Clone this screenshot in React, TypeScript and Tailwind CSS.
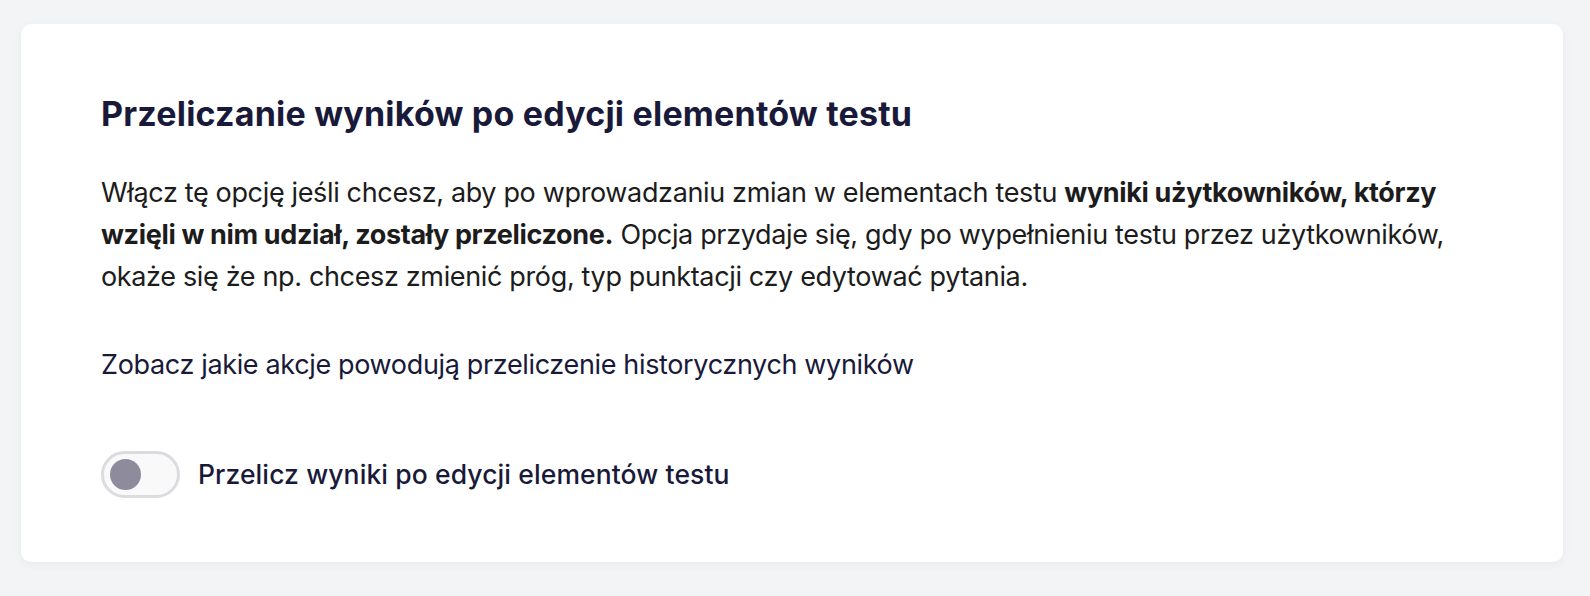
import { useState } from "react";

// Settings card: recalculating results after editing test items.
const App = () => {
  const [enabled, setEnabled] = useState(false);

  return (
    <div className="min-h-[596px] bg-[#f3f4f6] pl-[21px] pr-[27px] pt-[24px] font-['Inter',sans-serif]">
      <div className="rounded-[10px] bg-white shadow-[0_2px_10px_rgba(0,0,0,0.05)] px-[80px] pt-[65px] pb-[64px]">
        <h2 className="text-[34px] font-bold leading-[50px] tracking-[0.2px] text-[#19193a]">
          Przeliczanie wyników po edycji elementów testu
        </h2>

        <p className="mt-[33px] text-[27px] leading-[42px] tracking-[-0.35px] text-[#1c1c1c]">
          Włącz tę opcję jeśli chcesz, aby po wprowadzaniu zmian w elementach
          testu{" "}
          <strong className="font-bold">
            wyniki użytkowników, którzy wzięli w nim udział, zostały
            przeliczone.
          </strong>{" "}
          Opcja przydaje się, gdy po wypełnieniu testu przez użytkowników,
          okaże się że np. chcesz zmienić próg, typ punktacji czy edytować
          pytania.
        </p>

        <a className="mt-[46px] block text-[27px] leading-[42px] tracking-[-0.35px] text-[#19193a] cursor-pointer">
          Zobacz jakie akcje powodują przeliczenie historycznych wyników
        </a>

        <label className="mt-[65px] flex items-center gap-[18px] cursor-pointer">
          <button
            type="button"
            onClick={() => setEnabled((v) => !v)}
            className="relative h-[47px] w-[79px] shrink-0 rounded-full border-[3px] border-[#dcdce0] bg-[#f9f9f9]"
          >
            <span
              className={
                enabled
                  ? "absolute top-[5px] left-[38px] h-[31px] w-[31px] rounded-full bg-[#19193a]"
                  : "absolute top-[5px] left-[6px] h-[31px] w-[31px] rounded-full bg-[#8d8b9c]"
              }
            />
          </button>
          <span className="text-[26.5px] font-medium tracking-[0.1px] text-[#19193a]">
            Przelicz wyniki po edycji elementów testu
          </span>
        </label>
      </div>
    </div>
  );
};

export default App;
